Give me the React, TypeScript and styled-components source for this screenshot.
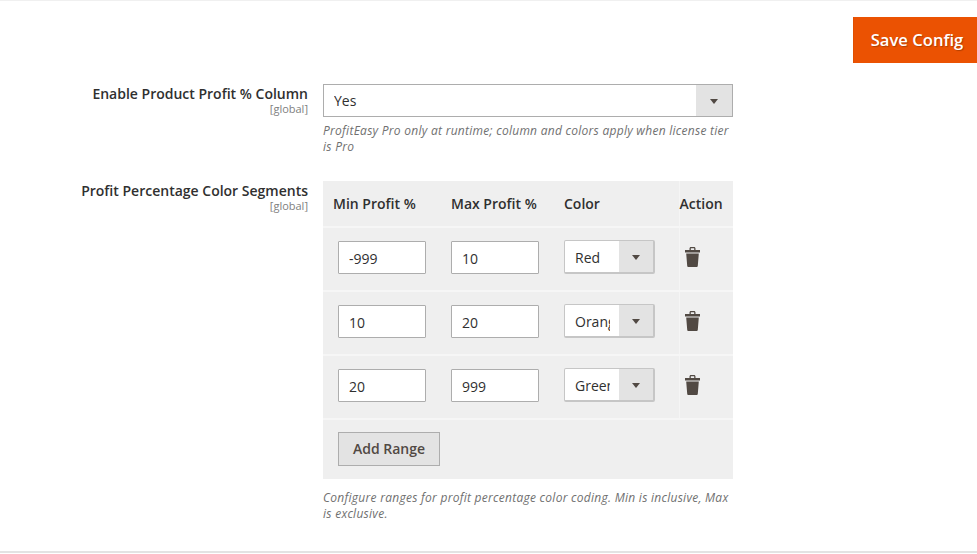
import React from 'react';
import styled, { createGlobalStyle } from 'styled-components';

const GlobalStyle = createGlobalStyle`
  html, body {
    margin: 0;
    padding: 0;
    background: #fff;
  }
  body {
    font-family: "Open Sans", "Liberation Sans", sans-serif;
    color: #303030;
    font-size: 14px;
  }
`;

const Page = styled.div`
  width: 977px;
  height: 554px;
  box-sizing: border-box;
  border-top: 1px solid #f0f0f0;
  overflow: hidden;
  display: flex;
  flex-direction: column;
`;

const ActionBar = styled.div`
  display: flex;
  justify-content: flex-end;
  padding-top: 16px;
  height: 83px;
  box-sizing: border-box;
  flex-shrink: 0;
`;

const SaveButton = styled.button`
  width: 124px;
  height: 46px;
  border: 0;
  border-left: 1px solid #e04f00;
  padding: 0 0 2px 3px;
  background: #eb5202;
  color: #fff;
  font-family: inherit;
  font-size: 16.6px;
  font-weight: 600;
  text-shadow: 1px 1px 1px rgba(0, 0, 0, 0.25);
`;

const Form = styled.div`
  flex: 1;
  display: flex;
  flex-direction: column;
  gap: 26px;
`;

const Row = styled.div`
  display: grid;
  grid-template-columns: 308px 410px;
  column-gap: 15px;
`;

const LabelBox = styled.div`
  text-align: right;
`;

const LabelText = styled.div`
  font-size: 14px;
  font-weight: 600;
  line-height: 19px;
  color: #303030;
`;

const Scope = styled.div`
  font-size: 11px;
  line-height: 12px;
  color: #808080;
`;

const Note = styled.p<{ $gap: number }>`
  margin: ${({ $gap }) => $gap}px 0 0;
  font-size: 12px;
  letter-spacing: 0.27px;
  font-style: italic;
  line-height: 16px;
  color: #707070;
`;

const SelectBox = styled.div<{ $width: number; $arrow: number; $height: number }>`
  box-sizing: border-box;
  width: ${({ $width }) => $width}px;
  height: ${({ $height }) => $height}px;
  display: flex;
  border: 1px solid #adadad;
  background: #fff;
  overflow: hidden;
  color: #303030;
  font-size: 14px;
  span:first-child {
    flex: 1;
    min-width: 0;
    margin: 0 9px 0 10px;
    white-space: nowrap;
    overflow: hidden;
    line-height: ${({ $height }) => $height - 2}px;
  }
  span:last-child {
    width: ${({ $arrow }) => $arrow}px;
    flex-shrink: 0;
    background: #e3e3e3;
    display: flex;
    align-items: center;
    justify-content: center;
  }
  span:last-child::after {
    content: "";
    margin-top: 1px;
    border-left: 4px solid transparent;
    border-right: 4px solid transparent;
    border-top: 5px solid #514943;
  }
`;

const RowSelect = styled(SelectBox)`
  border-color: #c6c6c6;
  border-width: 1px 2px 2px 1px;
  border-radius: 2px;
  span:first-child {
    line-height: ${({ $height }) => $height}px;
  }
`;

const Table = styled.table`
  width: 410px;
  border-collapse: collapse;
  table-layout: fixed;
  background: #efefef;
`;

const HeadCell = styled.th<{ $width: number; $flush?: boolean }>`
  width: ${({ $width }) => $width}px;
  height: 46px;
  padding: 0 0 0 ${({ $flush }) => ($flush ? 0 : 10)}px;
  box-sizing: border-box;
  text-align: left;
  font-size: 14px;
  font-weight: 600;
  color: #303030;
  border-bottom: 2px solid #f6f6f6;
  border-left: ${({ $flush }) => ($flush ? '1px solid #f5f5f5' : '0')};
`;

const BodyRow = styled.tr`
  height: 64px;
`;

const Cell = styled.td<{ $flush?: boolean }>`
  padding: 0 0 4px ${({ $flush }) => ($flush ? 5 : 10)}px;
  border-bottom: 2px solid #f6f6f6;
  border-left: ${({ $flush }) => ($flush ? '1px solid #f5f5f5' : '0')};
`;

const FirstCell = styled(Cell)`
  padding-left: 15px;
`;

const TextField = styled.input`
  display: block;
  box-sizing: border-box;
  width: 88px;
  height: 33px;
  padding: 2px 10px 0;
  border: 1px solid #adadad;
  border-radius: 1px;
  background: #fff;
  color: #303030;
  font-family: inherit;
  font-size: 14px;
  outline: none;
`;

const TrashIcon = styled.svg`
  display: block;
  width: 15px;
  height: 20px;
  fill: #514943;
`;

const AddCell = styled.td`
  height: 58px;
  padding: 0 0 1px 15px;
`;

const AddButton = styled.button`
  display: block;
  box-sizing: border-box;
  width: 102px;
  height: 34px;
  padding: 0 0 2px;
  border: 1px solid #adadad;
  background: #e3e3e3;
  color: #514943;
  font-family: inherit;
  font-size: 14px;
  font-weight: 600;
`;

const Footer = styled.div`
  height: 2px;
  background: #e3e3e3;
  margin-bottom: 1px;
  flex-shrink: 0;
`;

const Trash = () => (
  <TrashIcon viewBox="0 0 15 20">
    <path d="M4.5 1.5C4.5 .7 5.1 0 5.9 0h3.2c.8 0 1.4.7 1.4 1.5V3H15v2.5H0V3h4.5V1.5zM5.8 3h3.4V1.3H5.8V3z" />
    <path d="M1.2 6.5h12.6l-1 12.2c0 .7-.6 1.3-1.3 1.3h-8c-.7 0-1.3-.6-1.3-1.3l-1-12.2z" />
  </TrashIcon>
);

const ranges = [
  { min: '-999', max: '10', color: 'Red' },
  { min: '10', max: '20', color: 'Orange' },
  { min: '20', max: '999', color: 'Green' },
];

export default function App() {
  return (
    <>
      <GlobalStyle />
      <Page>
        <ActionBar>
          <SaveButton>Save Config</SaveButton>
        </ActionBar>
        <Form>
          <Row>
            <LabelBox>
              <LabelText>Enable Product Profit % Column</LabelText>
              <Scope>[global]</Scope>
            </LabelBox>
            <div>
              <SelectBox $width={410} $arrow={36} $height={33}>
                <span>Yes</span>
                <span />
              </SelectBox>
              <Note $gap={6}>ProfitEasy Pro only at runtime; column and colors apply when license tier is Pro</Note>
            </div>
          </Row>
          <Row>
            <LabelBox>
              <LabelText>Profit Percentage Color Segments</LabelText>
              <Scope>[global]</Scope>
            </LabelBox>
            <div>
              <Table>
                <thead>
                  <tr>
                    <HeadCell $width={118}>Min Profit %</HeadCell>
                    <HeadCell $width={113}>Max Profit %</HeadCell>
                    <HeadCell $width={125}>Color</HeadCell>
                    <HeadCell $width={54} $flush>Action</HeadCell>
                  </tr>
                </thead>
                <tbody>
                  {ranges.map((r) => (
                    <BodyRow key={r.min}>
                      <FirstCell>
                        <TextField defaultValue={r.min} />
                      </FirstCell>
                      <Cell>
                        <TextField defaultValue={r.max} />
                      </Cell>
                      <Cell>
                        <RowSelect $width={91} $arrow={34} $height={34}>
                          <span>{r.color}</span>
                          <span />
                        </RowSelect>
                      </Cell>
                      <Cell $flush>
                        <Trash />
                      </Cell>
                    </BodyRow>
                  ))}
                  <tr>
                    <AddCell colSpan={4}>
                      <AddButton>Add Range</AddButton>
                    </AddCell>
                  </tr>
                </tbody>
              </Table>
              <Note $gap={11}>Configure ranges for profit percentage color coding. Min is inclusive, Max is exclusive.</Note>
            </div>
          </Row>
        </Form>
        <Footer />
      </Page>
    </>
  );
}
